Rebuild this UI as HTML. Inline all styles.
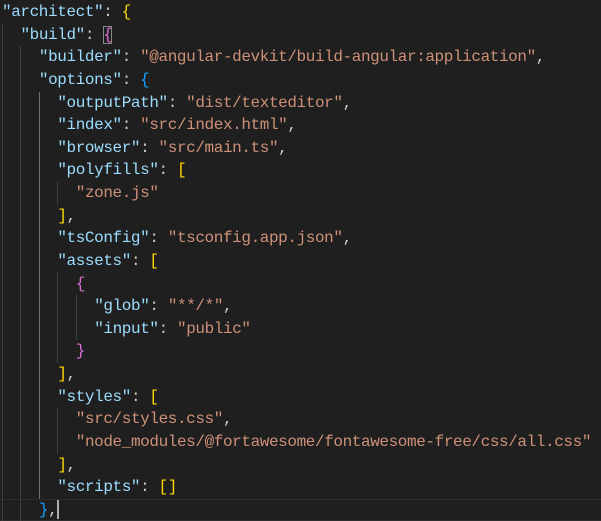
<!DOCTYPE html>
<html><head><style>
html,body{margin:0;padding:0;background:#1f1f1f;width:601px;height:521px;overflow:hidden}
#c{position:absolute;left:2px;top:1px;font-family:"Liberation Mono",monospace;font-size:16px;letter-spacing:-0.4px;color:#cccccc}
.l{height:22.64px;line-height:22.64px;position:relative;white-space:pre}
.g{display:inline-block;width:18.45px;height:22.64px;vertical-align:top;box-shadow:inset 1px 0 0 #404040}
.g.a{box-shadow:inset 1px 0 0 #707070}
.k{color:#9cdcfe}.s{color:#ce9178}
.y{color:#ffd700}.p{color:#da70d6}.b{color:#179fff}
.box{outline:1px solid #888;outline-offset:-1px}
.cur{display:inline-block;width:1.5px;height:19px;background:#aeafad;vertical-align:middle}
#hl{position:absolute;left:0;top:499px;width:601px;height:22px;border-top:1px solid #2c2c2c;border-bottom:1px solid #2c2c2c;box-sizing:border-box}
</style></head><body>
<div id="hl"></div>
<div id="c"><div class="l"><span class="k">"architect"</span>: <span class="y">{</span></div><div class="l"><span class="g"></span><span class="k">"build"</span>: <span class="p box">{</span></div><div class="l"><span class="g"></span><span class="g"></span><span class="k">"builder"</span>: <span class="s">"@angular-devkit/build-angular:application"</span>,</div><div class="l"><span class="g"></span><span class="g"></span><span class="k">"options"</span>: <span class="b">{</span></div><div class="l"><span class="g"></span><span class="g"></span><span class="g a"></span><span class="k">"outputPath"</span>: <span class="s">"dist/texteditor"</span>,</div><div class="l"><span class="g"></span><span class="g"></span><span class="g a"></span><span class="k">"index"</span>: <span class="s">"src/index.html"</span>,</div><div class="l"><span class="g"></span><span class="g"></span><span class="g a"></span><span class="k">"browser"</span>: <span class="s">"src/main.ts"</span>,</div><div class="l"><span class="g"></span><span class="g"></span><span class="g a"></span><span class="k">"polyfills"</span>: <span class="y">[</span></div><div class="l"><span class="g"></span><span class="g"></span><span class="g a"></span><span class="g"></span><span class="s">"zone.js"</span></div><div class="l"><span class="g"></span><span class="g"></span><span class="g a"></span><span class="y">]</span>,</div><div class="l"><span class="g"></span><span class="g"></span><span class="g a"></span><span class="k">"tsConfig"</span>: <span class="s">"tsconfig.app.json"</span>,</div><div class="l"><span class="g"></span><span class="g"></span><span class="g a"></span><span class="k">"assets"</span>: <span class="y">[</span></div><div class="l"><span class="g"></span><span class="g"></span><span class="g a"></span><span class="g"></span><span class="p">{</span></div><div class="l"><span class="g"></span><span class="g"></span><span class="g a"></span><span class="g"></span><span class="g"></span><span class="k">"glob"</span>: <span class="s">"**/*"</span>,</div><div class="l"><span class="g"></span><span class="g"></span><span class="g a"></span><span class="g"></span><span class="g"></span><span class="k">"input"</span>: <span class="s">"public"</span></div><div class="l"><span class="g"></span><span class="g"></span><span class="g a"></span><span class="g"></span><span class="p">}</span></div><div class="l"><span class="g"></span><span class="g"></span><span class="g a"></span><span class="y">]</span>,</div><div class="l"><span class="g"></span><span class="g"></span><span class="g a"></span><span class="k">"styles"</span>: <span class="y">[</span></div><div class="l"><span class="g"></span><span class="g"></span><span class="g a"></span><span class="g"></span><span class="s">"src/styles.css"</span>,</div><div class="l"><span class="g"></span><span class="g"></span><span class="g a"></span><span class="g"></span><span class="s">"node_modules/@fortawesome/fontawesome-free/css/all.css"</span></div><div class="l"><span class="g"></span><span class="g"></span><span class="g a"></span><span class="y">]</span>,</div><div class="l"><span class="g"></span><span class="g"></span><span class="g a"></span><span class="k">"scripts"</span>: <span class="y">[]</span></div><div class="l"><span class="g"></span><span class="g"></span><span class="b">}</span>,<span class="cur"></span></div></div>
</body></html>
